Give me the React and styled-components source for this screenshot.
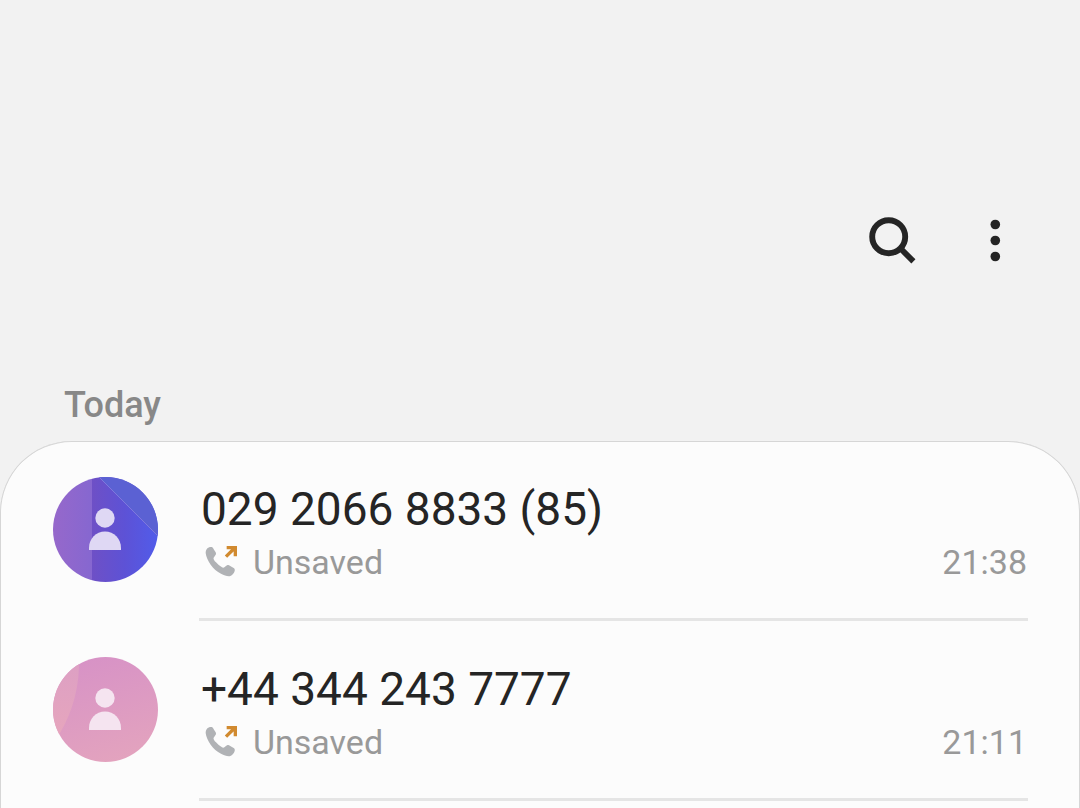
import React from "react";
import styled, { createGlobalStyle } from "styled-components";

const GlobalStyle = createGlobalStyle`
  * { box-sizing: border-box; }
  body {
    margin: 0;
    background: #f2f2f2;
    font-family: Roboto, "Liberation Sans", sans-serif;
    color: #252525;
  }
`;

const Screen = styled.main`
  display: flex;
  flex-direction: column;
  min-height: 100vh;
`;

const Toolbar = styled.header`
  display: flex;
  justify-content: flex-end;
  gap: 39px;
  padding: 208px 53px 109px;
`;

const IconButton = styled.button`
  display: grid;
  place-items: center;
  width: 64px;
  height: 64px;
  padding: 0;
  border: 0;
  background: none;
  color: #252525;
  cursor: pointer;
`;

const DayHeading = styled.h2`
  margin: 0;
  padding: 0 64px 12px;
  font-size: 36px;
  line-height: 48px;
  font-weight: 500;
  color: #888888;
`;

const CallList = styled.ul`
  flex: 1;
  margin: 0;
  padding: 0;
  list-style: none;
  background: #fcfcfc;
  border-radius: 72px 72px 0 0;
  box-shadow: inset 0 1px 0 #d6d6d6, inset 1px 0 0 #d6d6d6, inset -1px 0 0 #d6d6d6;
`;

const CallRow = styled.li`
  display: flex;
  gap: 41px;
  padding: 0 52px 0 53px;
`;

const Avatar = styled.svg`
  flex: none;
  width: 105px;
  height: 105px;
  margin-top: 36px;
`;

const Details = styled.div`
  flex: 1;
  display: flex;
  flex-direction: column;
  height: 180px;
  padding-top: 40px;
  border-bottom: 3px solid #e5e5e5;
`;

const PhoneNumber = styled.span`
  padding-left: 2px;
  font-size: 46px;
  line-height: 56px;
`;

const Meta = styled.div`
  display: flex;
  align-items: center;
  padding: 4px 1px 0 4px;
  font-size: 34px;
  line-height: 42px;
  color: #999999;
`;

const Label = styled.span`
  flex: 1;
  padding-left: 14px;
`;

const SearchIcon = () => (
  <svg width="48" height="48" viewBox="0 0 48 48" fill="none" stroke="currentColor" aria-hidden="true">
    <circle cx="20.7" cy="20.7" r="16.5" strokeWidth="5.9" />
    <path d="M31.8 31.8 L45.4 45.4" strokeWidth="5.8" />
  </svg>
);

const MoreIcon = () => (
  <svg width="48" height="48" viewBox="0 0 48 48" fill="currentColor" aria-hidden="true">
    <circle cx="24.3" cy="8.5" r="4.8" />
    <circle cx="24.3" cy="24.5" r="4.8" />
    <circle cx="24.3" cy="40.5" r="4.8" />
  </svg>
);

const OutgoingIcon = () => (
  <svg width="36" height="36" viewBox="0 0 108 108" role="img" aria-label="Outgoing call">
    <path
      fill="#b0b2b5"
      d="M12 14 C15 10 22 8 26 9 C29 10 31 13 33 17 L38 25 C40 29 39 32 37 34 L32 41 C30 44 34 50 39 55 C44 61 50 66 57 70 C60 72 63 71 65 69 L70 65 C72 63 75 63 78 64 L92 72 C95 74 96 77 95 81 C93 88 88 94 82 96 C74 98 64 94 54 89 C42 83 31 73 23 62 C15 51 9 38 8 27 C8 22 9 18 12 14 Z"
    />
    <path fill="none" stroke="#d18a2f" strokeWidth="10" d="M69 38 L95 12 M71 11 H97 V37" />
  </svg>
);

const Person = ({ color }) => (
  <g fill={color}>
    <circle cx="52" cy="41" r="9.7" />
    <path d="M36 73 V71 C36 62 43 54.6 52 54.6 C61 54.6 68 62 68 71 V73 Z" />
  </g>
);

const VioletAvatar = () => (
  <Avatar viewBox="0 0 105 105" aria-hidden="true">
    <defs>
      <clipPath id="violet-clip"><circle cx="52.5" cy="52.5" r="52.5" /></clipPath>
      <linearGradient id="violet-left">
        <stop offset="0" stopColor="#9668cb" />
        <stop offset="1" stopColor="#8667d0" />
      </linearGradient>
      <linearGradient id="violet-right">
        <stop offset="0" stopColor="#6e50c6" />
        <stop offset="0.5" stopColor="#5d52d6" />
        <stop offset="1" stopColor="#515cea" />
      </linearGradient>
    </defs>
    <g clipPath="url(#violet-clip)">
      <rect width="39" height="105" fill="url(#violet-left)" />
      <rect x="39" width="66" height="105" fill="url(#violet-right)" />
      <path d="M46 0 H105 V59 Z" fill="#5b61d3" />
      <path d="M46 0 L105 59" stroke="#7f78dc" strokeWidth="1" />
    </g>
    <Person color="#dfd8f4" />
  </Avatar>
);

const PinkAvatar = () => (
  <Avatar viewBox="0 0 105 105" aria-hidden="true">
    <defs>
      <clipPath id="pink-clip"><circle cx="52.5" cy="52.5" r="52.5" /></clipPath>
      <linearGradient id="pink-main" x1="0.3" y1="0" x2="0.6" y2="1">
        <stop offset="0" stopColor="#d792c6" />
        <stop offset="1" stopColor="#e3a3be" />
      </linearGradient>
      <linearGradient id="pink-side" x1="0" y1="0" x2="0" y2="1">
        <stop offset="0" stopColor="#dc9fc4" />
        <stop offset="1" stopColor="#e7a6bc" />
      </linearGradient>
    </defs>
    <g clipPath="url(#pink-clip)">
      <rect width="105" height="105" fill="url(#pink-main)" />
      <path d="M0 0 H26 C27 28 20 54 7 76 L0 84 Z" fill="url(#pink-side)" />
    </g>
    <Person color="#f5e4f0" />
  </Avatar>
);

const calls = [
  { number: "029 2066 8833 (85)", label: "Unsaved", time: "21:38", Picture: VioletAvatar },
  { number: "+44 344 243 7777", label: "Unsaved", time: "21:11", Picture: PinkAvatar },
];

export default function App() {
  return (
    <>
      <GlobalStyle />
      <Screen>
        <Toolbar>
          <IconButton type="button" aria-label="Search"><SearchIcon /></IconButton>
          <IconButton type="button" aria-label="More options"><MoreIcon /></IconButton>
        </Toolbar>
        <DayHeading>Today</DayHeading>
        <CallList>
          {calls.map(({ number, label, time, Picture }) => (
            <CallRow key={number}>
              <Picture />
              <Details>
                <PhoneNumber>{number}</PhoneNumber>
                <Meta>
                  <OutgoingIcon />
                  <Label>{label}</Label>
                  <time>{time}</time>
                </Meta>
              </Details>
            </CallRow>
          ))}
        </CallList>
      </Screen>
    </>
  );
}
